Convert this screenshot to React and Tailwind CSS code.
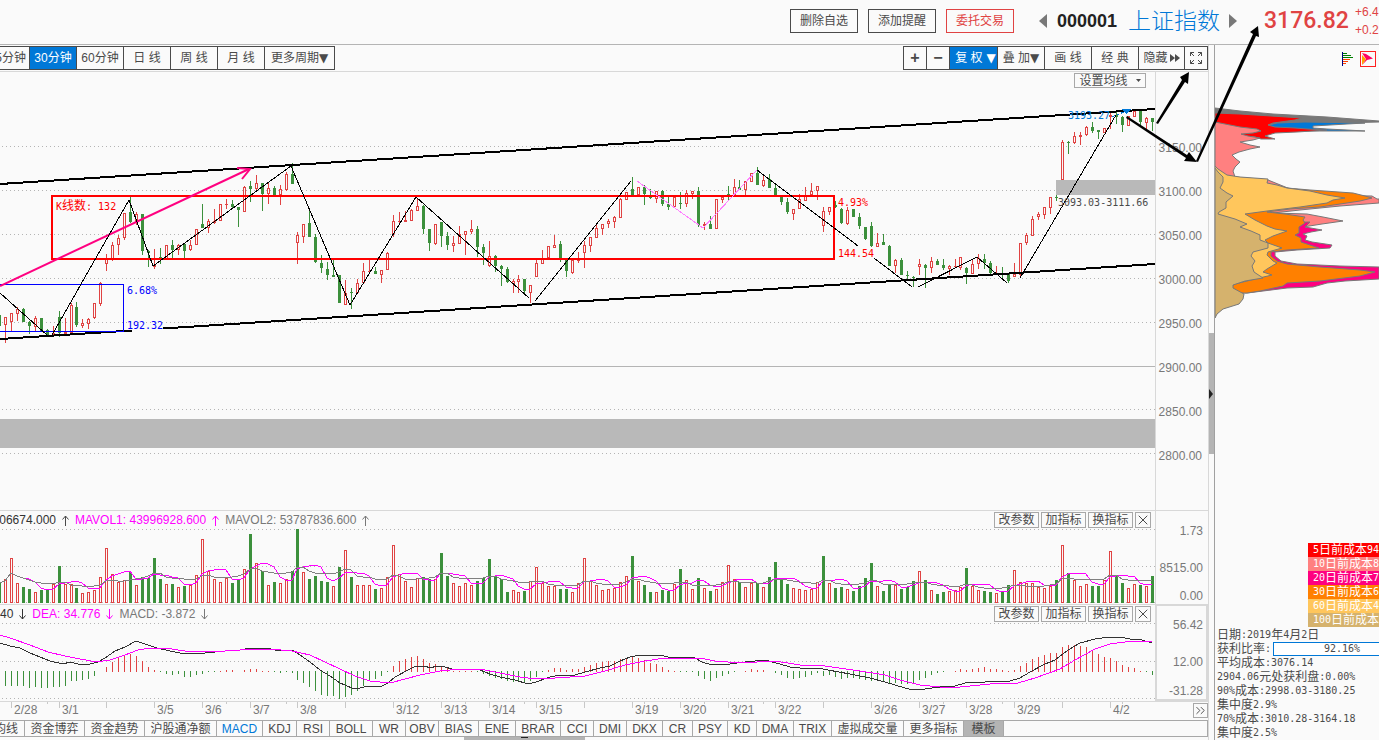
import { ChevronsRight, X } from 'lucide-react'
import clsx from 'clsx'

const RED = '#e04343'
const GREEN = '#3c903c'
const GRID = '#b4b4b4'

// [up, high, bodyTop, bodyBottom, low], one row per 30 minute bar
const candles = [
  [0, 315, 315, 326, 326],
  [1, 317, 317, 325, 343], [1, 313, 313, 322, 331], [1, 307, 309, 314, 321], [0, 308, 309, 322, 322],
  [0, 321, 322, 326, 334], [1, 316, 318, 327, 331], [0, 318, 318, 332, 332], [0, 329, 330, 336, 337],
  [1, 326, 333, 335, 336], [0, 311, 317, 333, 337], [1, 318, 332, 334, 335], [1, 303, 305, 333, 333],
  [0, 302, 307, 325, 327], [1, 319, 323, 326, 328], [1, 318, 319, 324, 329], [1, 303, 303, 318, 319],
  [1, 282, 283, 304, 306], [1, 254, 259, 264, 271], [1, 242, 245, 260, 261], [1, 235, 238, 245, 255],
  [1, 213, 213, 238, 240], [0, 197, 212, 222, 223], [1, 212, 214, 222, 225], [0, 214, 214, 251, 255],
  [0, 250, 251, 253, 267], [1, 249, 265, 267, 269], [0, 248, 257, 259, 264], [1, 245, 245, 260, 260],
  [0, 240, 245, 250, 258], [1, 244, 245, 250, 255], [0, 243, 244, 251, 260], [1, 240, 245, 250, 251],
  [1, 229, 229, 245, 245], [0, 204, 224, 228, 228], [1, 219, 221, 228, 233], [1, 209, 221, 223, 224],
  [1, 204, 204, 221, 221], [1, 199, 204, 205, 209], [0, 200, 204, 207, 209], [0, 207, 207, 210, 227],
  [1, 186, 187, 212, 212], [0, 181, 186, 189, 202], [1, 175, 183, 189, 191], [0, 183, 183, 194, 211],
  [1, 182, 188, 194, 204], [0, 186, 188, 196, 196], [1, 185, 189, 195, 205], [1, 172, 174, 190, 191],
  [0, 163, 174, 184, 184], [1, 232, 235, 243, 264], [1, 224, 224, 237, 243], [0, 209, 223, 237, 237],
  [0, 234, 237, 262, 263], [0, 255, 263, 268, 273], [0, 262, 269, 275, 280], [0, 260, 275, 277, 277],
  [0, 275, 275, 303, 303], [1, 280, 293, 305, 305], [0, 288, 292, 293, 309], [1, 279, 283, 293, 294],
  [1, 263, 271, 283, 283], [1, 260, 271, 272, 272], [0, 267, 271, 274, 274], [1, 270, 270, 275, 283],
  [1, 252, 253, 270, 270], [1, 215, 221, 234, 237], [1, 212, 221, 222, 224], [1, 211, 220, 222, 222],
  [1, 209, 210, 221, 221], [1, 198, 206, 211, 211], [0, 205, 206, 229, 234], [0, 229, 229, 243, 251],
  [1, 224, 224, 244, 245], [0, 222, 222, 236, 247], [0, 232, 236, 245, 250], [1, 236, 243, 246, 252],
  [1, 226, 234, 244, 244], [1, 231, 231, 235, 255], [1, 220, 229, 232, 234], [0, 226, 229, 247, 257],
  [0, 244, 247, 253, 265], [1, 241, 256, 266, 267], [0, 255, 256, 266, 272], [0, 265, 266, 269, 286],
  [0, 267, 269, 282, 283], [1, 279, 281, 284, 293], [1, 275, 279, 282, 293], [0, 279, 279, 291, 294],
  [1, 285, 285, 293, 303], [1, 260, 263, 277, 277], [1, 250, 259, 264, 264], [1, 246, 246, 258, 258],
  [1, 235, 245, 248, 248], [0, 241, 244, 260, 262], [0, 259, 260, 271, 277], [1, 259, 260, 273, 274],
  [1, 252, 259, 261, 263], [1, 241, 245, 253, 268], [1, 237, 237, 246, 252], [1, 223, 228, 238, 238],
  [1, 224, 224, 229, 235], [1, 219, 221, 224, 228], [1, 216, 217, 222, 228], [1, 198, 199, 218, 218],
  [1, 192, 192, 200, 200], [0, 177, 189, 195, 195], [1, 187, 187, 195, 195], [0, 185, 187, 194, 205],
  [0, 189, 196, 198, 199], [1, 191, 191, 199, 203], [0, 190, 191, 204, 206], [0, 197, 204, 207, 210],
  [1, 196, 197, 207, 208], [0, 192, 203, 204, 209], [1, 190, 193, 204, 207], [1, 191, 191, 194, 199],
  [0, 187, 191, 225, 227], [1, 222, 224, 226, 230], [0, 216, 224, 229, 229], [1, 199, 199, 229, 229],
  [1, 196, 197, 200, 203], [0, 186, 194, 196, 201], [1, 179, 187, 195, 195], [0, 180, 187, 190, 190],
  [1, 181, 181, 190, 195], [1, 173, 173, 182, 182], [0, 167, 173, 185, 185], [1, 176, 180, 186, 187],
  [0, 174, 179, 188, 188], [0, 185, 188, 195, 197], [0, 196, 197, 202, 205], [0, 198, 202, 212, 214],
  [1, 209, 209, 214, 220], [1, 194, 199, 209, 209], [1, 187, 195, 201, 201], [1, 183, 191, 195, 196],
  [1, 186, 186, 191, 200], [1, 207, 211, 226, 232], [1, 207, 207, 212, 215], [0, 201, 205, 207, 208],
  [0, 208, 209, 223, 224], [1, 207, 210, 224, 225], [0, 209, 209, 217, 217], [0, 213, 217, 226, 229],
  [0, 227, 227, 239, 240], [0, 222, 226, 246, 247], [1, 233, 243, 247, 247], [0, 234, 242, 245, 245],
  [0, 245, 246, 266, 266], [1, 259, 260, 266, 273], [0, 258, 260, 275, 275], [0, 271, 275, 276, 280],
  [0, 276, 277, 278, 287], [1, 259, 264, 267, 275], [0, 264, 265, 268, 288], [1, 257, 261, 268, 273],
  [0, 259, 261, 265, 265], [0, 259, 265, 268, 270], [1, 265, 266, 269, 275], [1, 259, 266, 267, 267],
  [1, 257, 257, 268, 270], [0, 267, 268, 273, 284], [1, 260, 264, 274, 274], [1, 254, 258, 264, 269],
  [0, 254, 259, 263, 269], [0, 261, 263, 273, 276], [1, 266, 273, 274, 274], [0, 267, 274, 275, 280],
  [0, 273, 274, 281, 283], [1, 263, 274, 277, 277], [1, 243, 243, 275, 277], [1, 233, 235, 243, 245],
  [1, 216, 219, 236, 236], [1, 212, 214, 217, 220], [1, 207, 207, 215, 219], [1, 197, 197, 208, 214],
  [0, 195, 197, 198, 201], [1, 140, 142, 180, 180], [0, 141, 142, 143, 154], [1, 132, 136, 143, 144],
  [1, 132, 135, 137, 145], [1, 126, 127, 135, 136], [0, 122, 127, 131, 133], [0, 130, 130, 132, 139],
  [1, 128, 128, 133, 133], [1, 111, 115, 117, 129], [0, 112, 115, 117, 124], [0, 116, 117, 125, 132],
  [1, 116, 116, 126, 126], [1, 111, 111, 117, 117], [0, 110, 111, 122, 126], [1, 117, 118, 123, 130],
  [0, 118, 118, 122, 131],
]

// bar heights, negative when the bar closed lower
const volumes = [
  -20, 24, 45, 20, -16, -14, 11, -13, -13, 19, -37, 19, 19, -15, 10, 11, 13, 26, 55, 29, 21, 23, -31, 18, -26, -25,
  -45, -24, 19, -19, 16, -17, 18, 28, 64, 32, 24, 21, 25, -20, -23, 34, -69, 40, -32, 18, -21, 20, 24, -32, -74, 31,
  -24, -27, -22, -21, 17, -36, 53, -26, 18, 18, 18, -14, 15, 26, 58, 29, 22, 16, 25, -26, -24, 24, -50, -27, 20, 17,
  20, 18, -22, -25, -44, -27, -24, -11, 13, 11, -12, 22, 36, 20, 17, 17, -14, -14, 11, 20, 45, 22, 18, 13, 14, 15,
  21, 27, -47, 22, -18, -11, 11, -13, -12, 19, -34, 23, 14, -25, 15, -12, 14, 21, 38, 24, -21, 16, 20, -20, 16, -26,
  -41, -23, -19, 15, 14, 13, 14, 21, -47, 20, -15, -16, 14, -12, -17, -25, -40, 17, -12, -19, 18, -14, -16, -22, 32,
  -23, 13, -9, -11, 12, 13, 16, -35, 17, 13, -12, -11, 10, -11, -18, 33, 21, 20, 20, 16, 15, 17, -23, 58, -30, 23,
  17, 19, -17, -17, 23, 52, -27, -20, 15, 19, -18, 17, -27,
]

const macd = [
  -15, -15, -15, -15, -15, -17, -16, -17, -17, -16, -16, -15, -10, -10, -9, -8, -5, 0, 5, 10, 14, 17, 18, 16, 11, 5,
  2, -1, -3, -4, -3, -6, -6, -4, -3, -1, -1, 1, 2, 2, 0, 2, 3, 3, 1, 1, -1, -2, -1, -2, -9, -12, -16, -20, -24, -25,
  -25, -28, -26, -24, -20, -15, -10, -8, -5, -1, 6, 11, 13, 15, 16, 13, 9, 8, 6, 4, 1, 1, 1, 1, -1, -3, -5, -7, -8,
  -10, -11, -10, -11, -10, -6, -1, 2, 4, 4, 2, 3, 3, 5, 7, 9, 10, 11, 11, 13, 14, 15, 14, 12, 9, 8, 5, 2, 1, -1, -1,
  -1, -5, -8, -10, -7, -5, -3, -1, 0, 1, 3, 2, 2, 0, -2, -4, -7, -8, -7, -6, -4, -2, -5, -4, -6, -8, -7, -7, -8, -9,
  -10, -10, -10, -12, -12, -13, -13, -12, -9, -7, -4, -2, -1, 0, 1, 3, 2, 3, 4, 5, 3, 3, 2, 1, 2, 6, 9, 13, 15, 17,
  19, 19, 25, 27, 27, 26, 25, 22, 18, 15, 14, 11, 7, 5, 4, 1, -1, -4,
]

const dif =
  '0,643 10,646 20,648 30,653 40,657 50,661 63,664 70,662 78,664 90,664 98,662 105,658 115,651 125,647 136,641 145,644 157,648 170,651 185,654 205,653 225,651 240,650 250,648 266,648 275,650 292,650 300,655 310,662 320,670 330,676 340,683 352,688 360,688 368,686 382,686 388,683 395,677 408,670 416,666 425,666 430,668 437,666 445,667 452,669 470,669 480,670 490,674 500,677 515,680 528,684 536,682 550,677 560,675 575,675 585,672 600,668 610,666 620,661 630,657 640,655 660,655 668,657 685,657 695,658 702,662 712,665 730,664 745,662 765,660 772,662 780,664 790,667 800,668 818,668 828,670 850,674 870,678 885,682 895,685 912,690 925,689 940,687 955,686 965,683 985,682 1010,681 1020,678 1030,672 1045,664 1055,660 1068,650 1080,643 1095,639 1110,637 1120,637 1130,639 1142,640 1152,643'
const dea =
  '0,635 10,638 30,645 48,652 65,656 80,659 97,662 110,660 125,655 138,650 150,648 165,648 185,651 210,652 240,650 270,649 292,651 310,655 325,662 340,669 355,676 370,681 390,683 405,679 420,675 440,671 460,669 480,669 500,673 520,677 536,679 555,678 585,676 605,671 625,665 645,661 665,658 700,658 715,661 740,663 775,661 800,665 825,666 860,671 885,675 900,680 920,685 940,687 960,687 990,684 1018,683 1035,678 1060,669 1075,660 1095,649 1110,644 1125,642 1152,641'

const dates = ['2/28', '3/1', '', '3/5', '3/6', '3/7', '3/8', '', '3/12', '3/13', '3/14', '3/15', '', '3/19', '3/20', '3/21', '3/22', '', '3/26', '3/27', '3/28', '3/29', '', '4/2']

const prices = ['3150.00', '3100.00', '3050.00', '3000.00', '2950.00', '2900.00', '2850.00', '2800.00']

const periods = [
  { name: '5分钟', width: 'w-[30px] justify-end pr-[3px]' },
  { name: '30分钟', width: 'w-[47px] justify-center', active: true },
  { name: '60分钟', width: 'w-[47px] justify-center' },
  { name: '日 线', width: 'w-[47px] justify-center' },
  { name: '周 线', width: 'w-[47px] justify-center' },
  { name: '月 线', width: 'w-[47px] justify-center' },
  { name: '更多周期', width: 'w-[70px] justify-center', arrow: true },
]

const indicators = [
  { name: '均线', width: 'w-[25px] justify-end pr-[6px]' },
  { name: '资金博弈', width: 'w-[60px]' },
  { name: '资金趋势', width: 'w-[60px]' },
  { name: '沪股通净额', width: 'w-[72px]' },
  { name: 'MACD', width: 'w-[46px]' },
  { name: 'KDJ', width: 'w-[34px]' },
  { name: 'RSI', width: 'w-[33px]' },
  { name: 'BOLL', width: 'w-[43px]' },
  { name: 'WR', width: 'w-[33px]' },
  { name: 'OBV', width: 'w-[33px]' },
  { name: 'BIAS', width: 'w-[40px]' },
  { name: 'ENE', width: 'w-[37px]' },
  { name: 'BRAR', width: 'w-[45px]' },
  { name: 'CCI', width: 'w-[33px]' },
  { name: 'DMI', width: 'w-[33px]' },
  { name: 'DKX', width: 'w-[36px]' },
  { name: 'CR', width: 'w-[30px]' },
  { name: 'PSY', width: 'w-[35px]' },
  { name: 'KD', width: 'w-[29px]' },
  { name: 'DMA', width: 'w-[37px]' },
  { name: 'TRIX', width: 'w-[38px]' },
  { name: '虚拟成交量', width: 'w-[72px]' },
  { name: '更多指标', width: 'w-[60px]' },
  { name: '模板', width: 'w-[40px]' },
]

const costLegend = [
  { text: '5日前成本94', color: 'bg-[#ff0000]' },
  { text: '10日前成本8', color: 'bg-[#ff8080]' },
  { text: '20日前成本7', color: 'bg-[#ff0080]' },
  { text: '30日前成本6', color: 'bg-[#ff8000]' },
  { text: '60日前成本4', color: 'bg-[#ffc65c]' },
  { text: '100日前成本', color: 'bg-[#d5b26d]' },
]

// stacked cost areas, widest first
const costAreas = [
  { fill: '#787878', points: '0,108 25,111 58,114 112,117 138,119 164,121 164,122 125,123 60,124 0,125' },
  { fill: '#0078d7', points: '50,126 62,123 90,122 150,123 132,124 98,126 98,128 112,129 132,130 150,131 132,131 60,131' },
  { fill: '#ff0000', points: '0,113 25,114 87,118 80,120 58,123 53,125 60,127 80,128 92,129 112,130 82,132 60,133 50,136 60,139 46,139 40,137 25,136 0,140' },
  { fill: '#ff8080', points: '0,122 25,127 42,129 46,131 38,133 26,134 33,136 45,138 38,140 25,142 35,145 45,147 35,149 24,152 17,155 21,159 25,162 20,167 18,171 20,177 53,180 90,195 157,196 162,199 164,199 164,203 125,206 85,210 58,213 92,214 108,217 128,221 107,224 88,227 0,227' },
  { fill: '#ff0080', points: '0,224 95,222 90,227 107,230 96,232 88,234 92,236 90,240 97,242 117,245 115,248 82,250 60,252 60,256 66,261 82,264 125,266 164,267 164,279 130,281 112,283 98,287 72,288 32,293 0,293' },
  { fill: '#ff8000', points: '0,186 72,188 95,190 138,193 150,196 157,198 145,201 125,204 105,207 75,209 52,212 70,214 90,217 88,220 90,223 84,227 84,233 80,235 86,238 86,242 95,245 104,248 72,250 56,252 56,256 62,261 72,264 105,267 145,270 160,272 145,276 105,281 72,283 68,286 45,291 32,293 0,293' },
  { fill: '#ffc65c', points: '0,166 3,169 12,175 25,177 53,179 52,183 62,185 72,188 95,191 112,195 130,198 118,200 112,203 85,207 52,211 30,214 40,220 52,226 60,229 72,231 58,236 50,240 53,243 67,248 53,252 52,255 58,261 62,263 52,269 48,272 57,275 40,279 20,284 16,287 22,291 0,293' },
  { fill: '#d5b26d', points: '0,168 3,172 8,177 8,182 5,188 12,193 18,196 11,202 11,208 4,212 3,214 20,219 32,224 25,227 36,231 45,235 45,240 53,243 53,248 38,252 36,256 40,261 37,266 39,272 48,278 30,281 18,285 18,288 29,294 28,299 24,304 8,309 2,314 0,318' },
]

const zigzags = [
  '0,293 47,335',
  '52,335 129,200 153,266 291,166 350,305 416,197 529,298',
  '535,301 631,181',
  '757,170 858,246',
  '874,258 912,287',
  '918,287 977,257 1007,283',
  '1020,278 1116,115',
]

const barX = (index) => Math.floor(5.3 + 5.973 * (index - 1))

function averageLine(size) {
  return volumes
    .map((_, index) => {
      const part = volumes.slice(Math.max(0, index - size + 1), index + 1)
      const mean = part.reduce((sum, value) => sum + Math.abs(value), 0) / part.length
      return `${barX(index)},${Math.round(603 - mean)}`
    })
    .join(' ')
}

function GridLine({ y }) {
  return <path d={`M0 ${y}.5H1155`} stroke={GRID} strokeDasharray="1 3" strokeDashoffset="2" />
}

function Bar({ x, top, bottom, up }) {
  const height = Math.max(bottom - top, 1)
  if (!up || height < 3) return <rect x={x - 1} y={top} width="3" height={height} fill={up ? RED : GREEN} />
  return <rect x={x - 0.5} y={top + 0.5} width="2" height={height - 1} fill="#fafafa" stroke={RED} />
}

function PriceChart() {
  return (
    <svg
      className="block h-[438px] w-full"
      viewBox="0 72 1155 438"
      preserveAspectRatio="xMaxYMin slice"
      shapeRendering="crispEdges"
      fill="none"
    >
      <rect y="419" width="1155" height="29" fill="#b9b9b9" />
      <rect x="1056" y="180" width="99" height="15" fill="#b9b9b9" />
      {[146, 190, 234, 278, 322, 409, 453].map((y) => (
        <GridLine key={y} y={y} />
      ))}
      <path d="M0 366.5H1155" stroke={GRID} />
      {candles.map(([up, high, top, bottom, low], index) => (
        <g key={index}>
          <rect x={barX(index)} y={high} width="1" height={low - high} fill={up ? RED : GREEN} />
          <Bar x={barX(index)} top={top} bottom={bottom} up={up} />
        </g>
      ))}

      <path d="M0 184 1155 109M0 339 132 330.500M163 328.500 1155 264" stroke="#000" strokeWidth="2" />
      <rect x="52" y="196" width="782" height="63" stroke="#ff0000" strokeWidth="2" />
      <path d="M0 284.500H123.500V331.500H0" stroke="#0000ff" />
      <g stroke="#ff0080" strokeWidth="2" shapeRendering="auto">
        <path d="M0 286 249 169" />
        <path d="M237 168 250 169 242 179" />
      </g>
      {zigzags.map((points) => (
        <polyline key={points} points={points} stroke="#000" />
      ))}
      <polyline points="637,181 703,228 757,170" stroke="#ff80ff" />
      <path d="M1112 117 1124 112" stroke="#0078d7" strokeDasharray="3 2" />
      <path d="M1122 109h10l-6 5z" fill="#0078d7" />

      <g className="font-['DejaVu_Sans_Mono','Noto_Sans_CJK_SC',monospace] text-[10px]">
        <text x="56" y="210" fill="#ff0000">
          K<tspan className="text-xs">线数</tspan>: 132
        </text>
        <text x="838" y="206" fill="#ff0000">4.93%</text>
        <text x="838" y="257" fill="#ff0000">144.54</text>
        <text x="127" y="294" fill="#0000ff">6.68%</text>
        <text x="127" y="329" fill="#0000ff">192.32</text>
        <text x="1068" y="119" fill="#0078d7">3193.27</text>
        <text x="1058" y="206" fill="#4a4a4a">3093.03-3111.66</text>
      </g>
    </svg>
  )
}

function VolumeChart() {
  return (
    <svg
      className="block h-[76px] w-full"
      viewBox="0 528 1155 76"
      preserveAspectRatio="xMaxYMin slice"
      shapeRendering="crispEdges"
      fill="none"
    >
      {[529, 566, 602].map((y) => (
        <GridLine key={y} y={y} />
      ))}
      {volumes.map((value, index) => (
        <Bar key={index} x={barX(index)} top={603 - Math.abs(value)} bottom={603} up={value > 0} />
      ))}
      <polyline points={averageLine(5)} stroke="#ff00ff" />
      <polyline points={averageLine(10)} stroke="#808080" />
    </svg>
  )
}

function MacdChart() {
  return (
    <svg
      className="block h-[79px] w-full"
      viewBox="0 622 1155 79"
      preserveAspectRatio="xMaxYMin slice"
      shapeRendering="crispEdges"
      fill="none"
    >
      {[623, 661, 698].map((y) => (
        <GridLine key={y} y={y} />
      ))}
      {macd.map((value, index) => (
        <rect
          key={index}
          x={barX(index)}
          y={value > 0 ? 672 - value : 671}
          width="1"
          height={Math.abs(value)}
          fill={value > 0 ? RED : GREEN}
        />
      ))}
      <polyline points={dif} stroke="#323232" />
      <polyline points={dea} stroke="#ff00ff" />
    </svg>
  )
}

function DateAxis() {
  return (
    <svg
      className="block h-[18px] min-w-0 flex-1 text-xs"
      viewBox="0 702 1155 18"
      preserveAspectRatio="xMaxYMin slice"
      fill="#787878"
    >
      {dates.map((date, index) => {
        const x = barX(2 + index * 8)
        return (
          <g key={x}>
            <rect x={x} y="702" width="1" height="6" fill="#c8c8c8" />
            <text x={x + 3} y="714">
              {date}
            </text>
          </g>
        )
      })}
      {dates.slice(0, 19).map((_, index) => (
        <rect key={index} x={barX(8 + index * 10)} y="702" width="1" height="2" fill="#c8c8c8" />
      ))}
    </svg>
  )
}

function TrendArrow({ down }) {
  return (
    <svg className={clsx('mx-[6px] h-[11px] w-[7px]', down && 'rotate-180')} viewBox="0 0 7 11" fill="none" stroke="currentColor">
      <path d="M3.500 11V1M0.500 4.500 3.500 1 6.500 4.500" />
    </svg>
  )
}

function PanelButtons() {
  return (
    <div className="ml-auto flex gap-[2px] pr-1 text-[#4a4a4a]">
      {['改参数', '加指标', '换指标'].map((name) => (
        <button key={name} className="flex h-4 w-[45px] items-center justify-center border border-[#a8a8a8]">
          {name}
        </button>
      ))}
      <button aria-label="关闭" className="flex h-4 w-4 shrink-0 items-center justify-center border border-[#a8a8a8]">
        <X className="shrink-0" size={16} strokeWidth={1.5} />
      </button>
    </div>
  )
}

// digits are set narrower than the Chinese text around them
function MixedText({ children }) {
  return children.split(/([\u4e00-\u9fff]+)/).map((part, index) => (
    <span key={index} className={index % 2 ? 'text-xs' : "font-['DejaVu_Sans_Mono',monospace] text-[10px]"}>
      {part}
    </span>
  ))
}

function Header() {
  return (
    <header className="flex h-[45px] shrink-0 items-center justify-end overflow-hidden border-b border-[#b4b4b4] pb-[2px]">
      <div className="flex gap-[10px]">
        <button className="h-6 w-[68px] border border-[#4a4a4a]">删除自选</button>
        <button className="h-6 w-[68px] border border-[#4a4a4a]">添加提醒</button>
        <button className="h-6 w-[68px] border border-[#e04343] text-[#e04343]">委托交易</button>
      </div>
      <button aria-label="上一个" className="ml-[25px]">
        <svg className="h-[14px] w-2" viewBox="0 0 8 14" fill="#787878">
          <path d="M8 0v14L0 7z" />
        </svg>
      </button>
      <span className="ml-[10px] text-[18px] font-bold text-[#222]">000001</span>
      <h1 className="ml-[11px] text-[23px] leading-8 font-light text-[#0078d7]">上证指数</h1>
      <button aria-label="下一个" className="ml-[9px]">
        <svg className="h-[14px] w-2" viewBox="0 0 8 14" fill="#787878">
          <path d="M0 0v14l8-7z" />
        </svg>
      </button>
      <span className="ml-[27px] w-[85px] font-['Roboto','Liberation_Sans',sans-serif] text-[23px] font-medium text-[#e04343]">
        3176.82
      </span>
      <div className="ml-[6px] w-6 leading-[18px] text-[#e04343]">
        <div>+6.4</div>
        <div>+0.2</div>
      </div>
    </header>
  )
}

function Toolbar() {
  const cell = 'flex items-center justify-center border-r border-[#4a4a4a]'
  return (
    <div className="flex h-[27px] items-start justify-between border-b border-[#d8d8d8] pt-px">
      <div className="flex h-6 border-y border-[#4a4a4a]">
        {periods.map(({ name, width, active, arrow }) => (
          <button
            key={name}
            className={clsx(
              'flex items-center overflow-hidden border-r border-[#4a4a4a] whitespace-nowrap',
              width,
              active && 'bg-[#0078d7] text-white',
            )}
          >
            {name}
            {arrow && <span className="font-['DejaVu_Sans']">▼</span>}
          </button>
        ))}
      </div>
      <div className="flex h-6 border-y border-l border-[#4a4a4a] whitespace-nowrap">
        <button className={clsx(cell, 'w-[23px] text-base font-bold')}>+</button>
        <button className={clsx(cell, 'w-[23px] text-base font-bold')}>−</button>
        <button className={clsx(cell, 'w-12 gap-1 bg-[#0078d7] pl-1 text-white')}>
          复 权<span className="font-['DejaVu_Sans']">▼</span>
        </button>
        <button className={clsx(cell, 'w-[47px]')}>
          叠 加<span className="font-['DejaVu_Sans']">▼</span>
        </button>
        <button className={clsx(cell, 'w-[47px]')}>画 线</button>
        <button className={clsx(cell, 'w-[47px]')}>经 典</button>
        <button className={clsx(cell, 'w-[46px] gap-[2px]')}>
          隐藏
          <svg className="h-[8px] w-[10px]" viewBox="0 0 10 8" fill="#4a4a4a">
            <path d="M0 0l5 4-5 4zM5 0l5 4-5 4z" />
          </svg>
        </button>
        <button aria-label="全屏" className={clsx(cell, 'w-[23px]')}>
          <svg className="h-3 w-3" viewBox="0 0 12 12" fill="none" stroke="#4a4a4a">
            <path d="M.5 4V.5H4M8 .5h3.500V4M11.500 8v3.500H8M4 11.500H.5V8M.5.5 4 4M11.500.5 8 4M11.500 11.500 8 8M.5 11.500 4 8" />
          </svg>
        </button>
      </div>
    </div>
  )
}

function CostPanel() {
  return (
    <aside className="flex w-[165px] shrink-0 flex-col overflow-hidden border-l border-[#a0a0a0]">
      <div className="flex h-[27px] items-center justify-end gap-[6px] pr-[3px]">
        <svg className="h-[14px] w-3" viewBox="0 0 12 14" fill="none" shapeRendering="crispEdges">
          <path d="M.5 0v14" stroke="#000080" />
          <path d="M1 1.500h4M1 3.500h8M1 5.500h10" stroke="#008000" />
          <path d="M1 7.500h7M1 9.500h5M1 11.500h3" stroke="#ff4000" />
        </svg>
        <svg className="h-4 w-4" viewBox="0 0 16 16" fill="none">
          <rect x=".5" y=".5" width="15" height="15" stroke="#ff2020" />
          <path d="M2 2l4 1 7 4.500L7 9 2 14l4-6z" fill="#ff0060" />
          <path d="M2 4l4 4-4 6z" fill="#ffa000" />
        </svg>
      </div>
      <svg className="block h-[471px] w-full" viewBox="0 72 164 471" preserveAspectRatio="xMinYMin slice">
        {costAreas.map(({ fill, points }) => (
          <polygon key={fill} points={points} fill={fill} stroke="#787878" />
        ))}
      </svg>
      <ul className="w-[71px] self-end text-white">
        {costLegend.map(({ text, color }) => (
          <li key={text} className={clsx('flex h-[14px] items-center overflow-hidden pl-[5px] whitespace-nowrap', color)}>
            <MixedText>{text}</MixedText>
          </li>
        ))}
      </ul>
      <div className="mt-px pl-[2px] whitespace-nowrap [&>div]:flex [&>div]:h-[14px] [&>div]:items-center">
        <div>
          <MixedText>日期:2019年4月2日</MixedText>
        </div>
        <div>
          <MixedText>获利比率:</MixedText>
          <span className="ml-[2px] flex h-[14px] w-[138px] shrink-0 items-center justify-center border border-[#0078d7] bg-white">
            <MixedText>92.16%</MixedText>
          </span>
        </div>
        <div>
          <MixedText>平均成本:3076.14</MixedText>
        </div>
        <div>
          <MixedText>2904.06元处获利盘:0.00%</MixedText>
        </div>
        <div>
          <MixedText>90%成本:2998.03-3180.25</MixedText>
        </div>
        <div>
          <MixedText>集中度2.9%</MixedText>
        </div>
        <div>
          <MixedText>70%成本:3010.28-3164.18</MixedText>
        </div>
        <div>
          <MixedText>集中度2.5%</MixedText>
        </div>
      </div>
    </aside>
  )
}

export default function App() {
  return (
    <div className="relative flex min-h-screen flex-col overflow-hidden bg-[#fafafa] font-['Liberation_Sans','Noto_Sans_CJK_SC',sans-serif] text-xs text-[#4a4a4a]">
      <Header />
      <div className="flex flex-1">
        <main className="flex min-w-0 flex-1 flex-col">
          <Toolbar />
          <section className="flex">
            <div className="relative min-w-0 flex-1">
              <PriceChart />
              <button className="absolute top-px right-[9px] flex h-[15px] w-[72px] items-center justify-center gap-2 border border-[#a8a8a8] bg-[#fafafa]">
                设置均线
                <svg className="h-[3px] w-[5px]" viewBox="0 0 5 3" fill="#4a4a4a">
                  <path d="M0 0h5L2.500 3z" />
                </svg>
              </button>
            </div>
            <div className="w-[53px] shrink-0 border-l border-[#d8d8d8] pt-[53px] pr-[6px] text-right text-[#787878]">
              {prices.map((price) => (
                <div key={price} className="h-11 leading-[46px]">
                  {price}
                </div>
              ))}
            </div>
          </section>

          <section className="flex border-t border-[#d8d8d8]">
            <div className="min-w-0 flex-1">
              <div className="flex h-[17px] items-center pt-px whitespace-nowrap">
                <span className="flex w-14 justify-end overflow-hidden text-[#323232]">06674.000</span>
                <TrendArrow />
                <span className="text-[#ff00ff]">MAVOL1: 43996928.600</span>
                <span className="text-[#ff00ff]">
                  <TrendArrow />
                </span>
                <span className="text-[#787878]">MAVOL2: 53787836.600</span>
                <span className="text-[#787878]">
                  <TrendArrow />
                </span>
                <PanelButtons />
              </div>
              <VolumeChart />
            </div>
            <div className="flex w-[53px] shrink-0 flex-col justify-between border-l border-[#d8d8d8] pt-3 pr-[5px] text-right text-[#787878]">
              <div>1.73</div>
              <div className="pt-2">8515.00</div>
              <div>0.00</div>
            </div>
          </section>

          <section className="flex border-t border-[#d8d8d8]">
            <div className="min-w-0 flex-1">
              <div className="flex h-[17px] items-center pt-px whitespace-nowrap">
                <span className="text-[#323232]">40</span>
                <span className="text-[#323232]">
                  <TrendArrow down />
                </span>
                <span className="text-[#ff00ff]">DEA: 34.776</span>
                <span className="text-[#ff00ff]">
                  <TrendArrow down />
                </span>
                <span className="text-[#787878]">MACD: -3.872</span>
                <span className="text-[#787878]">
                  <TrendArrow down />
                </span>
                <PanelButtons />
              </div>
              <MacdChart />
            </div>
            <div className="flex w-[53px] shrink-0 flex-col justify-between border-2 border-t border-[#d8d8d8] pt-[11px] pr-[3px] text-right text-[#787878]">
              <div>56.42</div>
              <div className="pt-2">12.00</div>
              <div>-31.28</div>
            </div>
          </section>

          <section className="flex border-t border-[#d8d8d8]">
            <DateAxis />
            <div className="flex w-[53px] shrink-0 justify-end pt-px">
              <button aria-label="更多" className="flex h-[15px] w-[15px] items-center justify-center border border-[#a8a8a8]">
                <ChevronsRight className="shrink-0" size={15} strokeWidth={1.5} />
              </button>
            </div>
          </section>

          <nav className="flex h-[17px] border-y border-r border-[#a8a8a8]">
            {indicators.map(({ name, width }) => (
              <button
                key={name}
                className={clsx(
                  'flex shrink-0 items-center overflow-hidden border-r border-[#a8a8a8] whitespace-nowrap',
                  width,
                  name !== '均线' && 'justify-center',
                  name === 'MACD' && 'text-[#0078d7]',
                  name === '模板' && 'bg-[#b4b4b4]',
                )}
              >
                {name}
              </button>
            ))}
          </nav>
          <div className="ml-[464px] h-[3px] w-[121px] bg-[#b4b4b4]">
            <div className="mx-auto h-[3px] w-[7px] border-t border-[#222]" />
          </div>
        </main>

        <div className="w-[6px] shrink-0 border-l border-[#d8d8d8] pt-[288px]">
          <div className="flex h-[121px] items-center bg-[#b4b4b4]">
            <svg className="h-[10px] w-1" viewBox="0 0 4 10" fill="#222">
              <path d="M0 0l4 5-4 5z" />
            </svg>
          </div>
        </div>
        <CostPanel />
      </div>

      {/* hand drawn arrows, over the header and both panels */}
      <svg className="pointer-events-none absolute top-0 right-0 h-[170px] w-[260px]" viewBox="1119 0 260 170">
        <path d="M1127 116 1187 155 1189 152 1197 162 1184 161 1186 158 1126 118z" />
        <path d="M1156 123 1182 80 1180 77 1189 72 1188 84 1185 82 1158 124z" />
        <path d="M1196 161 1253 34 1250 32 1258 26 1259 37 1256 36 1198 162z" />
      </svg>
    </div>
  )
}
